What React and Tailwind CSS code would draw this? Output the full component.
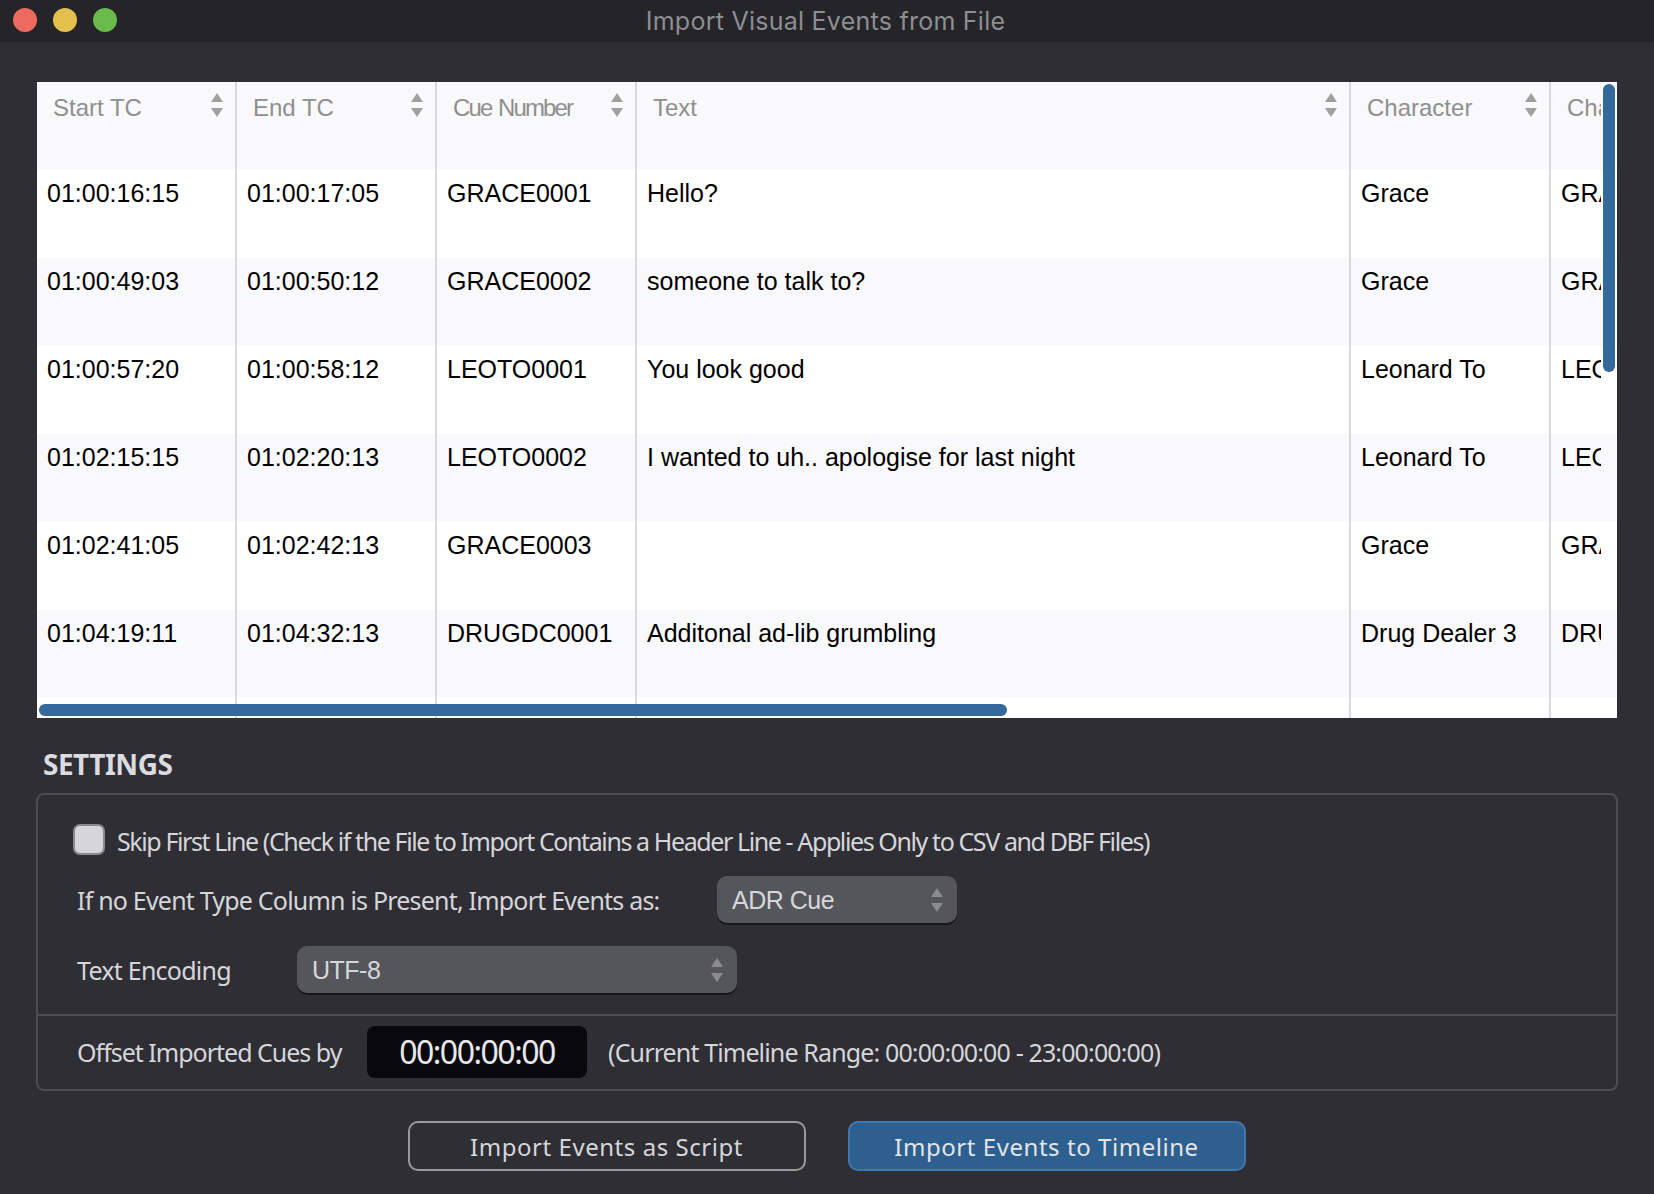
import React from "react";

const rows = [
  ["01:00:16:15", "01:00:17:05", "GRACE0001", "Hello?", "Grace", "GRACE"],
  ["01:00:49:03", "01:00:50:12", "GRACE0002", "someone to talk to?", "Grace", "GRACE"],
  ["01:00:57:20", "01:00:58:12", "LEOTO0001", "You look good", "Leonard To", "LEOTO"],
  ["01:02:15:15", "01:02:20:13", "LEOTO0002", "I wanted to uh.. apologise for last night", "Leonard To", "LEOTO"],
  ["01:02:41:05", "01:02:42:13", "GRACE0003", "", "Grace", "GRACE"],
  ["01:04:19:11", "01:04:32:13", "DRUGDC0001", "Additonal ad-lib grumbling", "Drug Dealer 3", "DRUGDC"],
];

const headers = ["Start TC", "End TC", "Cue Number", "Text", "Character"];

// column widths incl. the 2px divider on the right
const widths = ["w-[200px]", "w-[200px]", "w-[200px]", "w-[714px]", "w-[200px]"];

function Arrows({ className, color }) {
  return (
    <svg width="14" height="26" viewBox="0 0 14 26" className={className}>
      <path d="M7 1 L13 10 L1 10 Z" fill={color} />
      <path d="M7 25 L13 16 L1 16 Z" fill={color} />
    </svg>
  );
}

function Select({ width, value }) {
  return (
    <div className={`${width} h-[47px] flex items-center justify-between pl-[15px] pr-[13px] bg-[#55565c] rounded-[10px] shadow-[0_2px_0_#17171a] text-[25px] tracking-[-0.5px] text-[#d6d6da] font-['Liberation_Sans',sans-serif]`}>
      <span className="pt-[2px]">{value}</span>
      <Arrows color="#8b8b90" />
    </div>
  );
}

export default function App() {
  return (
    <div className="w-[1654px] h-[1194px] bg-[#2e2e34] overflow-hidden font-['Noto_Sans',sans-serif]">
      {/* title bar */}
      <div className="relative h-[42px] bg-[#242429] flex items-center justify-center pr-[3px] pt-[1px]">
        <div className="absolute left-[13px] top-[8px] flex gap-[16px]">
          <div className="w-[24px] h-[24px] rounded-full bg-[#ec6a5e]" />
          <div className="w-[24px] h-[24px] rounded-full bg-[#e3bf4d]" />
          <div className="w-[24px] h-[24px] rounded-full bg-[#69bb4a]" />
        </div>
        <span className="text-[25px] tracking-[0.25px] text-[#8e8e93] font-['Inter',sans-serif]">Import Visual Events from File</span>
      </div>

      <div className="px-[37px] pt-[40px]">
        {/* table */}
        <div className="relative h-[636px] bg-white overflow-hidden font-['Liberation_Sans',sans-serif]">
          <div className="flex h-[88px] bg-[#f9f9fb] text-[24px] text-[#8f8f8f]">
            {headers.map((h, i) => (
              <div key={h} className={`${widths[i]} shrink-0 relative border-r-2 border-[#dadada] pl-[16px] pt-[8px]`}>
                <span className={i === 2 ? "tracking-[-1.9px] [word-spacing:2px]" : ""}>{h}</span>
                <Arrows color="#a0a0a0" className="absolute right-[11px] top-[10px]" />
              </div>
            ))}
            <div className="w-[50px] pl-[16px] pt-[8px] overflow-hidden whitespace-nowrap">Character</div>
          </div>
          {rows.map((r, i) => (
            <div key={i} className={`flex h-[88px] text-[25px] text-black tabular-nums ${i % 2 === 1 ? "bg-[#f9f9fb]" : "bg-white"}`}>
              {r.slice(0, 5).map((c, j) => (
                <div key={j} className={`${widths[j]} shrink-0 border-r-2 border-[#dadada] pl-[10px] pt-[5px] whitespace-nowrap`}>
                  {c}
                </div>
              ))}
              <div className="w-[50px] pl-[10px] pt-[5px] overflow-hidden whitespace-nowrap">{r[5]}</div>
            </div>
          ))}
          <div className="flex h-[20px]">
            {widths.map((w, i) => (
              <div key={i} className={`${w} shrink-0 border-r-2 border-[#dadada]`} />
            ))}
          </div>
          {/* scrollbars */}
          <div className="absolute left-[1566px] top-[2px] w-[12px] h-[288px] rounded-full bg-[#336a9b]" />
          <div className="absolute left-[2px] top-[622px] w-[968px] h-[12px] rounded-full bg-[#336a9b]" />
        </div>

        {/* settings */}
        <div className="h-[75px] flex items-center pl-[6px] pt-[16px] text-[28px] font-bold text-[#dcdce0] tracking-[-0.5px]">SETTINGS</div>
        <div className="h-[298px] -mx-[1px] border-2 border-[#4c4c52] rounded-[8px] text-[25px] text-[#d6d6da]">
          <div className="h-[221px] border-b-2 border-[#4c4c52] pt-[29px] pl-[35px]">
            <div className="flex items-center h-[31px]">
              <div className="w-[32px] h-[31px] bg-[#d6d6d9] border-2 border-[#8a8a8e] rounded-[7px]" />
              <span className="ml-[12px] pt-[4px] tracking-[-1.4px]">Skip First Line (Check if the File to Import Contains a Header Line - Applies Only to CSV and DBF Files)</span>
            </div>
            <div className="flex items-center mt-[21px] pl-[4px]">
              <span className="w-[640px] pt-[2px] tracking-[-0.8px]">If no Event Type Column is Present, Import Events as:</span>
              <Select width="w-[240px]" value="ADR Cue" />
            </div>
            <div className="flex items-center mt-[23px] pl-[4px]">
              <span className="w-[220px] pt-[2px] tracking-[-0.75px]">Text Encoding</span>
              <Select width="w-[440px]" value="UTF-8" />
            </div>
          </div>
          <div className="flex items-center h-[71px] pl-[39px]">
            <span className="w-[290px] pt-[2px] tracking-[-1px]">Offset Imported Cues by</span>
            <div className="w-[220px] h-[52px] rounded-[8px] bg-[#09090b] flex items-center justify-center text-[32px] text-[#e8e8ec] tracking-[-1.5px]">00:00:00:00</div>
            <span className="ml-[21px] pt-[2px] tracking-[-0.86px]">(Current Timeline Range: 00:00:00:00 - 23:00:00:00)</span>
          </div>
        </div>

        {/* buttons */}
        <div className="flex justify-center gap-[42px] mt-[30px] ml-[-1px] text-[24px] text-[#d6d6da]">
          <button className="w-[398px] h-[50px] pt-[1px] rounded-[10px] border-2 border-[#9a9a9a] tracking-[0.55px]">Import Events as Script</button>
          <button className="w-[398px] h-[50px] pt-[1px] rounded-[10px] border-2 border-[#3f78b0] bg-[#2d5f8f] text-[#e4e4e8] tracking-[0.55px]">Import Events to Timeline</button>
        </div>
      </div>
    </div>
  );
}
